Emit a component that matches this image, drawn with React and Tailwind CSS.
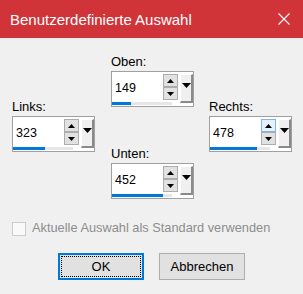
import React from 'react';

const font = { fontFamily: '"Liberation Sans", Arial, sans-serif' };

function Arrow({ down }) {
  return (
    <svg width="7" height="4" viewBox="0 0 7 4">
      {down ? <polygon points="0,0 7,0 3.5,4" fill="#000" /> : <polygon points="0,4 7,4 3.5,0" fill="#000" />}
    </svg>
  );
}

function SpinButton({ down, hover }) {
  return (
    <div className={`w-[15px] h-[13px] border flex items-center justify-center ${hover ? 'border-[#7eb4ea] bg-[#e5f1fb]' : 'border-[#adadad] bg-[#e1e1e1]'}`}>
      <Arrow down={down} />
    </div>
  );
}

function Spinner({ label, value, fill, hover }) {
  return (
    <div className="flex flex-col w-[83px]">
      <div className="h-[15px] leading-[15px] text-[13px] text-black mb-[2px]">{label}</div>
      <div className="w-[83px] h-[36px] border border-[#a0a0a0] bg-white flex flex-col">
        <div className="flex h-[30px]">
          <div className="w-[51px] pl-[3px] pt-[8px] text-[12.5px] leading-[16px] text-black">{value}</div>
          <div className="mt-[2px] flex flex-col">
            <SpinButton hover={hover} />
            <SpinButton down />
          </div>
          <div className="ml-[2px] mt-[2px] w-[13px] h-[29px] bg-[#f0f0f0] border-t border-l border-t-white border-l-white border-r-2 border-b-2 border-r-[#8a8a8a] border-b-[#8a8a8a] flex justify-center pt-[8px]">
            <svg width="9" height="5" viewBox="0 0 9 5">
              <polygon points="0,0 9,0 4.5,5" fill="#000" />
            </svg>
          </div>
        </div>
        <div className="w-[60px] h-[3px] bg-[#e6e6e6]">
          <div className="h-full bg-[#0078d7]" style={{ width: fill }} />
        </div>
      </div>
    </div>
  );
}

export default function App() {
  return (
    <div className="w-[303px] h-[294px] flex flex-col bg-[#f0f0f0] overflow-hidden" style={font}>
      <div className="h-[38px] bg-[#d13438] flex items-center justify-between pl-[10px] pr-[13px] shrink-0">
        <span className="text-white text-[15px] leading-none">Benutzerdefinierte Auswahl</span>
        <svg width="12" height="12" viewBox="0 0 12 12">
          <path d="M0.5 0.5 L11.5 11.5 M11.5 0.5 L0.5 11.5" stroke="#fff" strokeWidth="1.1" />
        </svg>
      </div>

      <div className="flex pl-[12px]">
        <div className="pt-[61px]">
          <Spinner label="Links:" value="323" fill={32} />
        </div>
        <div className="ml-[16px] pt-[16px] flex flex-col gap-[39px]">
          <Spinner label="Oben:" value="149" fill={19} />
          <Spinner label="Unten:" value="452" fill={51} />
        </div>
        <div className="ml-[15px] pt-[61px]">
          <Spinner label="Rechts:" value="478" fill={47} hover />
        </div>
      </div>

      <div className="mt-[22px] pl-[12px] flex items-center h-[15px] gap-[6px]">
        <div className="w-[14px] h-[14px] border border-[#cccccc] bg-[#f9f9f9]" />
        <span className="text-[12.8px] text-[#8d8d8d] leading-none">Aktuelle Auswahl als Standard verwenden</span>
      </div>

      <div className="mt-[17px] flex justify-center gap-[15px]">
        <button className="w-[86px] h-[27px] border-2 border-[#0078d7] bg-[#e1e1e1] p-[1px]">
          <div className="w-full h-full border border-dotted border-black flex items-center justify-center text-[13px] text-black">OK</div>
        </button>
        <button className="w-[86px] h-[27px] border border-[#adadad] bg-[#e1e1e1] flex items-center justify-center text-[13px] text-black">Abbrechen</button>
      </div>
    </div>
  );
}
